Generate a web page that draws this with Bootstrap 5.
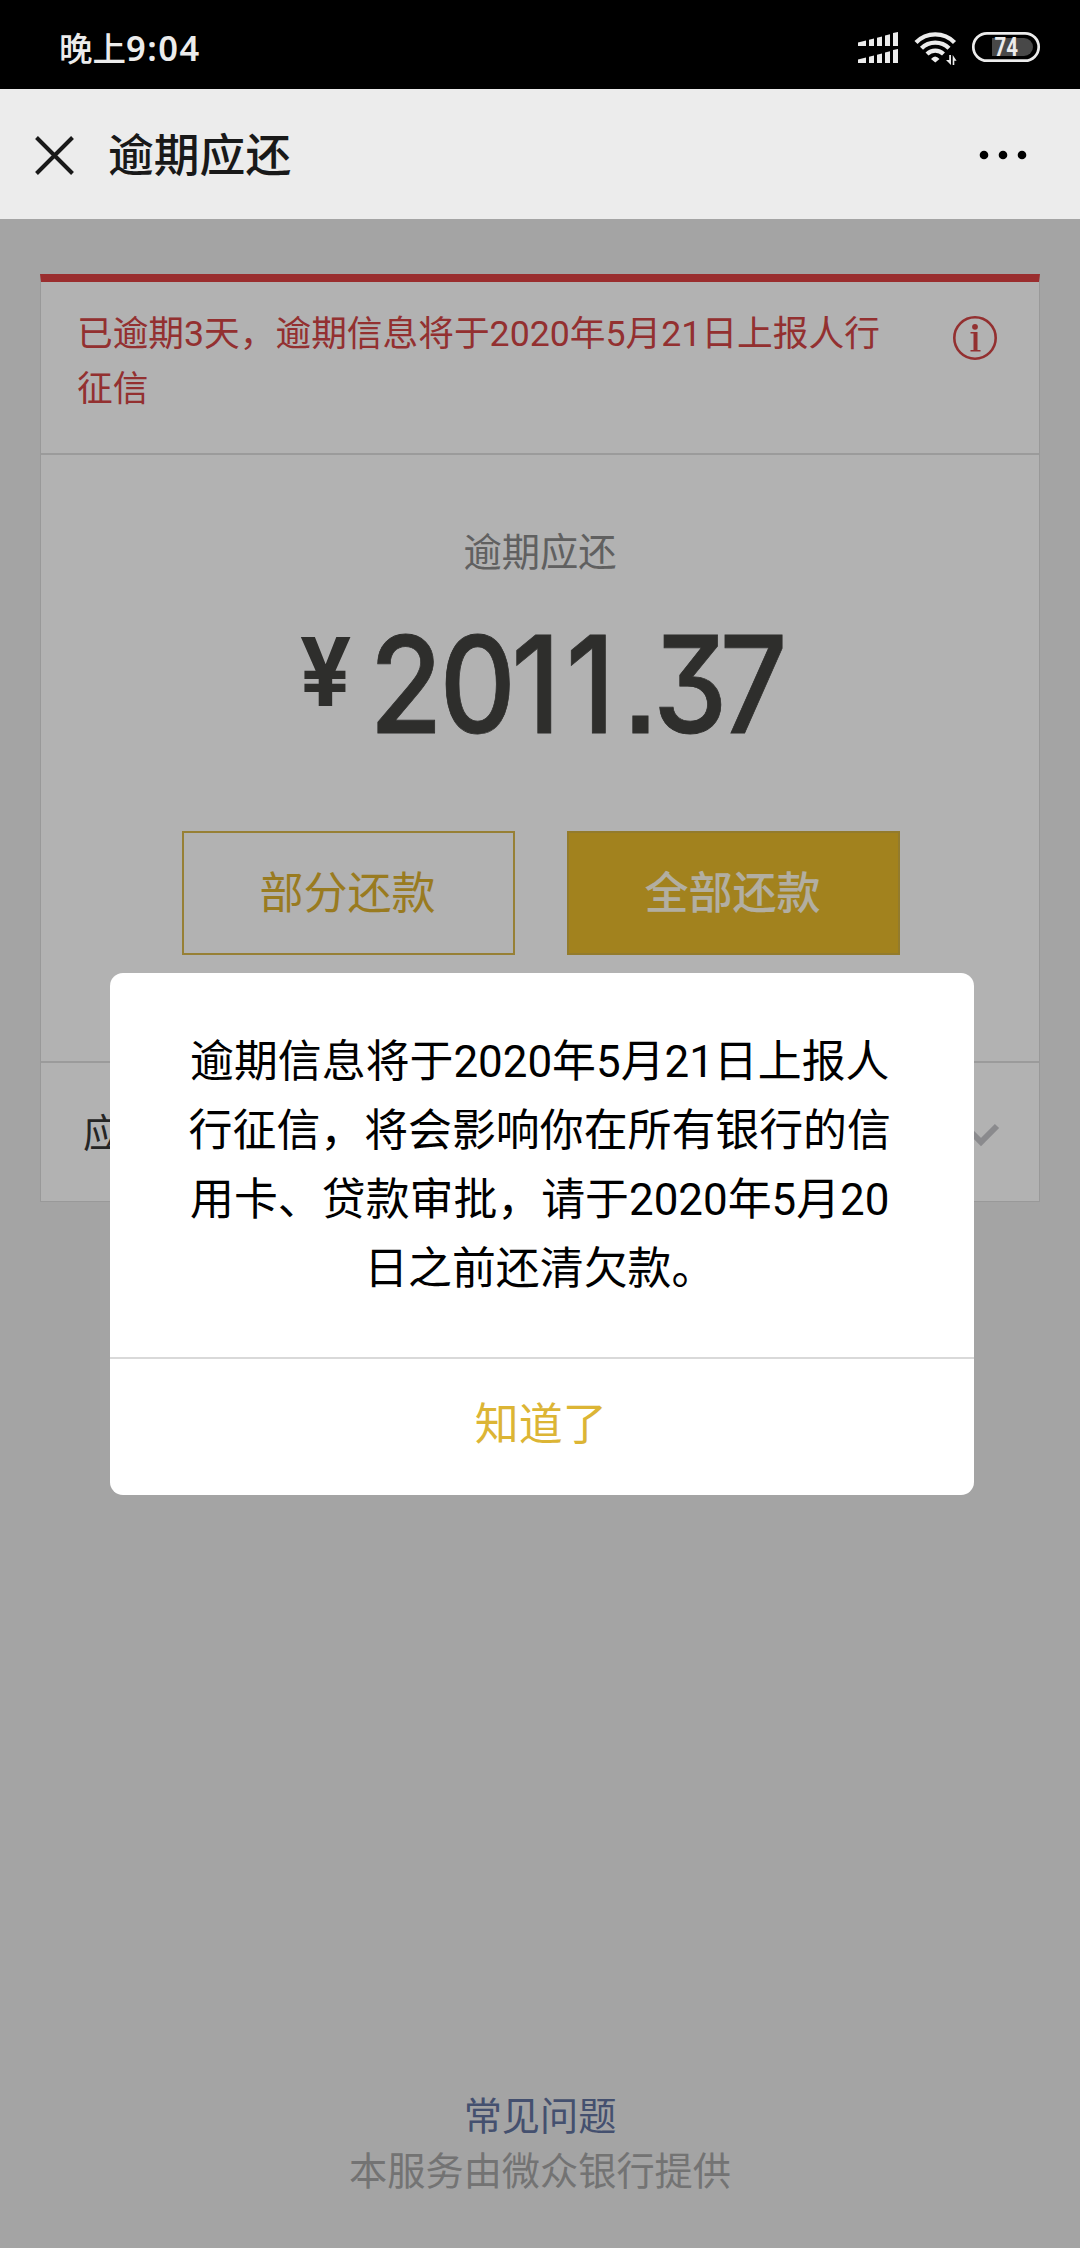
<!DOCTYPE html>
<html lang="zh-CN">
<head>
<meta charset="utf-8">
<meta name="viewport" content="width=device-width, initial-scale=1">
<title>逾期应还</title>
<link rel="stylesheet" href="https://cdn.jsdelivr.net/npm/bootstrap@5.3.0/dist/css/bootstrap.min.css">
<style>
  body { font-family: Roboto, "Noto Sans CJK SC", sans-serif; background: #ebebeb; }
  svg { display: block; flex: none; overflow: visible; }
  .screen { height: 2248px; overflow: hidden; }
  .statusbar { height: 89px; background: #000; color: #ececec; padding: 5px 40px 0 59px; }
  .clock { font: 500 33.5px/48px "Noto Sans", "Noto Sans CJK SC", sans-serif; margin-top: 1px; }
  .clock b { font-size: 34.5px; font-weight: 600; letter-spacing: 1.5px; }
  .titlebar { height: 130px; background: #ececec; padding: 2px 53px 0 35px; color: #191919; }
  .titlebar h1 { font-size: 45.8px; line-height: 60px; margin: 4px 0 0 34px; font-weight: 500; }
  .page { padding: 55px 40px 0; }
  .bill { --bs-card-border-radius: 0; --bs-card-inner-border-radius: 0; --bs-card-border-color: #dcdcdc; border-width: 1px; border-top: 8px solid #dd4142; height: 928px; }
  .notice { height: 173px; padding: 25px 41px 0 36px; border-bottom: 2px solid #dfdfdf; color: #d34546; }
  .notice p { width: 812px; font-size: 35.7px; line-height: 55px; margin: 0; }
  .notice svg { margin-top: 8px; }
  .due { height: 608px; padding-top: 70px; border-bottom: 2px solid #dfdfdf; }
  .due-label { font-size: 38.3px; line-height: 56px; color: #8a8a8a; }
  .sum { margin-top: 45px; font-family: Inter, sans-serif; font-weight: 500; font-feature-settings: "cv09", "ss07"; }
  .actions { gap: 52px; margin: 93px 0 0 2px; }
  .pay { width: 333px; height: 124px; font-size: 44px; border: 2px solid #d9b84c; border-radius: 0; padding: 2px 2px 0 0; color: #dcb02f; }
  .pay-all { border: 2px solid #d3b040; background: #e8bb2b; color: #fffae9; font-weight: 500; }
  .more { padding: 3px 39px 0 42px; font-size: 38.3px; color: #353535; }
  .foot { font-size: 38.2px; line-height: 55px; color: #a5a5a5; bottom: 48.5px; }
  .foot a { color: #62739f; }
  .shade { top: 219px; bottom: 0; background: rgba(0,0,0,.3); }
  .dialog { margin: 753.5px 106.5px 0 110px; height: 522px; border-radius: 13px; background: #fff; color: #000; }
  .dialog p { height: 386px; margin: 0; padding: 55px 81px 0 77px; font-size: 43.9px; line-height: 69px; border-bottom: 2px solid #d9d9d9; }
  .ok { font-size: 44px; line-height: 66px; color: #dcb535; padding: 0 2px 4px 0; }
</style>
</head>
<body>
<div class="screen position-relative d-flex flex-column">
  <header class="statusbar d-flex align-items-center justify-content-between">
    <span class="clock">晚上<b>9:04</b></span>
    <svg width="183" height="40" viewBox="858 27 183 40" fill="#ececec">
      <path d="M859 42.500l8-2v5.500h-8zM870 39.700l5-1.200V46h-5zM878 37.700l5-1.200V46h-5zM886 35.600l5-1.300V46h-5zM894 33l5-1v14h-5zM859 59.500l8-2V63h-8zM870 56.700l5-1.200V63h-5zM878 54.700l5-1.200V63h-5zM886 52.600l5-1.300V63h-5zM894 50l5-1v14h-5z"/>
      <g fill="none" stroke="#ececec" stroke-width="4.300"><path d="M917 42.500a27 27 0 0 1 38.500 0"/><path d="M922.500 48.200a19.500 19.500 0 0 1 27.500 0"/><path d="M928 54a12 12 0 0 1 16.500 0"/></g>
      <path d="M932 59q4-5 8.500 0l-4.200 3.500zM950.200 55h1.800v10l-5-5h3.200zM953.700 65h1.600v-4.200h2.300l-3.900-5.800z"/>
      <rect x="974.300" y="33.300" width="65.400" height="27.400" rx="13.700" fill="none" stroke="#ececec" stroke-width="2.700"/>
      <path d="M993 38h32a9 9 0 0 1 0 18h-32z" fill="#484848"/>
      <text x="995.500" y="55.800" font-family="Roboto, sans-serif" font-weight="700" font-size="25" textLength="23.500" lengthAdjust="spacingAndGlyphs">74</text>
    </svg>
  </header>
  <nav class="titlebar d-flex align-items-center">
    <svg width="39" height="39" viewBox="0 0 39 39" fill="none" stroke="#191919" stroke-width="4"><path d="M1.500 1.500l36 36M37.500 1.500l-36 36"/></svg>
    <h1>逾期应还</h1>
    <svg class="ms-auto" width="48" height="10" viewBox="0 0 48 10"><circle cx="5" cy="5" r="4.300"/><circle cx="24" cy="5" r="4.300"/><circle cx="43" cy="5" r="4.300"/></svg>
  </nav>
  <main class="page">
    <section class="card bill">
      <div class="notice d-flex align-items-start justify-content-between">
        <p>已逾期3天，逾期信息将于2020年5月21日上报人行征信</p>
        <svg width="46" height="46" viewBox="0 0 46 46" fill="#d34546"><circle cx="23" cy="23" r="20.700" fill="none" stroke="#d34546" stroke-width="2.600"/><circle cx="23" cy="11.800" r="2.900"/><path d="M18.500 17h7v18h3v1.500h-10V35h3V18.500h-3z"/></svg>
      </div>
      <div class="due d-flex flex-column align-items-center">
        <div class="due-label">逾期应还</div>
        <svg class="sum" width="500" height="112" viewBox="290 626 500 112" fill="#434340" stroke="#434340">
          <text transform="translate(299.500 706) scale(.9 1)" font-size="95" font-weight="700" stroke="none" textLength="58" lengthAdjust="spacingAndGlyphs">¥</text>
          <text transform="translate(0 732.700) scale(.88 1)" font-size="134.500" stroke-width=".8" x="420 499.500 581 643 707.500 742 818">2011.37</text>
        </svg>
        <div class="actions d-flex">
          <button class="btn pay">部分还款</button>
          <button class="btn pay pay-all">全部还款</button>
        </div>
      </div>
      <div class="more flex-grow-1 d-flex align-items-center justify-content-between">
        <span>应</span>
        <svg width="38" height="24" viewBox="0 0 38 24" fill="none" stroke="#c6c6ca" stroke-width="6"><path d="M3 4l16 16L35 4"/></svg>
      </div>
    </section>
  </main>
  <footer class="foot position-absolute start-0 end-0 text-center">
    <a class="text-decoration-none" href="#">常见问题</a>
    <div>本服务由微众银行提供</div>
  </footer>
  <div class="shade position-absolute start-0 end-0">
    <div class="dialog d-flex flex-column text-center" role="dialog">
      <p>逾期信息将于2020年5月21日上报人行征信，将会影响你在所有银行的信用卡、贷款审批，请于2020年5月20日之前还清欠款。</p>
      <button class="btn ok flex-grow-1">知道了</button>
    </div>
  </div>
</div>
<script src="https://cdn.jsdelivr.net/npm/bootstrap@5.3.0/dist/js/bootstrap.bundle.min.js"></script>
</body>
</html>
